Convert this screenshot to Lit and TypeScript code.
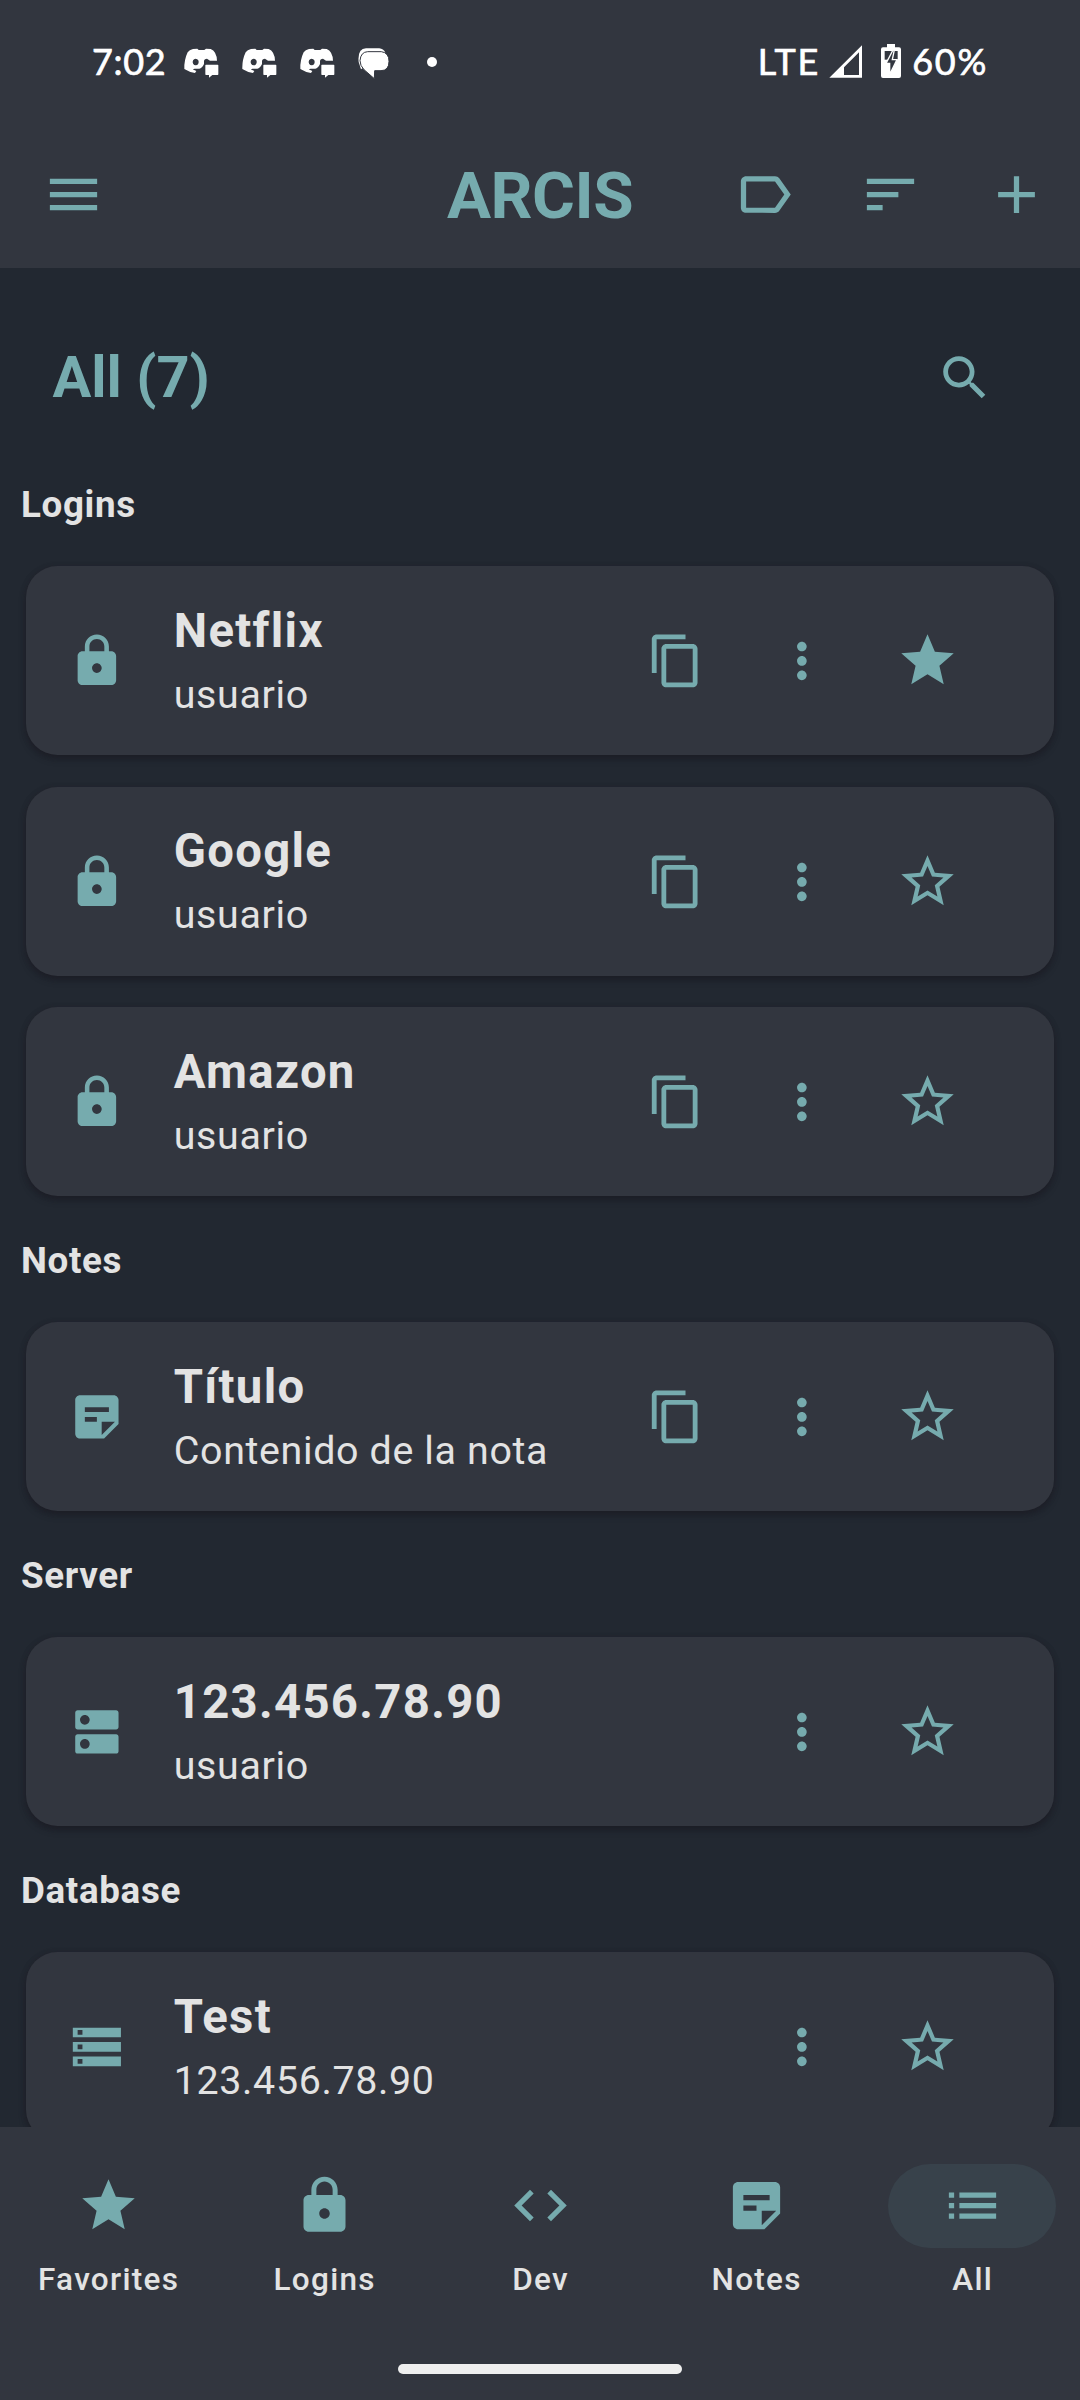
import { LitElement, html, css, nothing } from "lit";
import { customElement, property } from "lit/decorators.js";

type Entry = { icon: string; title: string; subtitle: string; copy?: boolean; starred?: boolean };
type Group = { name: string; entries: Entry[] };

const icons: Record<string, string> = {
  menu: "M3 18h18v-2H3v2zm0-5h18v-2H3v2zm0-7v2h18V6H3z",
  label:
    "M17.63 5.84C17.27 5.33 16.67 5 16 5L5 5.01C3.9 5.01 3 5.9 3 7v10c0 1.1.9 1.99 2 1.99L16 19c.67 0 1.27-.33 1.63-.84L22 12l-4.37-6.16zM16 17H5V7h11l3.55 5L16 17z",
  sort: "M3 18h6v-2H3v2zM3 6v2h18V6H3zm0 7h12v-2H3v2z",
  add: "M19 13h-6v6h-2v-6H5v-2h6V5h2v6h6v2z",
  search:
    "M15.5 14h-.79l-.28-.27C15.41 12.59 16 11.11 16 9.5 16 5.91 13.09 3 9.5 3S3 5.91 3 9.5 5.91 16 9.5 16c1.61 0 3.09-.59 4.23-1.57l.27.28v.79l5 4.99L20.49 19l-4.99-5zm-6 0C7.01 14 5 11.99 5 9.5S7.01 5 9.5 5 14 7.01 14 9.5 11.99 14 9.5 14z",
  lock: "M18 8h-1V6c0-2.76-2.24-5-5-5S7 3.24 7 6v2H6c-1.1 0-2 .9-2 2v10c0 1.1.9 2 2 2h12c1.1 0 2-.9 2-2V10c0-1.1-.9-2-2-2zm-6 9c-1.1 0-2-.9-2-2s.9-2 2-2 2 .9 2 2-.9 2-2 2zm3.1-9H8.9V6c0-1.71 1.39-3.1 3.1-3.1 1.71 0 3.1 1.39 3.1 3.1v2z",
  note: "M19 3H4.99C3.89 3 3 3.9 3 5l.01 14c0 1.1.89 2 1.99 2h10l6-6V5c0-1.1-.9-2-2-2zM7 8h10v2H7V8zm5 6H7v-2h5v2zm2 5.5V14h5.5L14 19.5z",
  dns: "M20 13H4c-.55 0-1 .45-1 1v6c0 .55.45 1 1 1h16c.55 0 1-.45 1-1v-6c0-.55-.45-1-1-1zM7 19c-1.1 0-2-.9-2-2s.9-2 2-2 2 .9 2 2-.9 2-2 2zM20 3H4c-.55 0-1 .45-1 1v6c0 .55.45 1 1 1h16c.55 0 1-.45 1-1V4c0-.55-.45-1-1-1zM7 9c-1.1 0-2-.9-2-2s.9-2 2-2 2 .9 2 2-.9 2-2 2z",
  storage: "M2 20h20v-4H2v4zm2-3h2v2H4v-2zM2 4v4h20V4H2zm4 3H4V5h2v2zm-4 7h20v-4H2v4zm2-3h2v2H4v-2z",
  copy: "M16 1H4c-1.1 0-2 .9-2 2v14h2V3h12V1zm3 4H8c-1.1 0-2 .9-2 2v14c0 1.1.9 2 2 2h11c1.1 0 2-.9 2-2V7c0-1.1-.9-2-2-2zm0 16H8V7h11v14z",
  more: "M12 8c1.1 0 2-.9 2-2s-.9-2-2-2-2 .9-2 2 .9 2 2 2zm0 2c-1.1 0-2 .9-2 2s.9 2 2 2 2-.9 2-2-.9-2-2-2zm0 6c-1.1 0-2 .9-2 2s.9 2 2 2 2-.9 2-2-.9-2-2-2z",
  star: "M12 17.27L18.18 21l-1.64-7.03L22 9.24l-7.19-.61L12 2 9.19 8.63 2 9.24l5.46 4.73L5.82 21z",
  starOutline:
    "M22 9.24l-7.19-.62L12 2 9.19 8.63 2 9.24l5.46 4.73L5.82 21 12 17.27 18.18 21l-1.63-7.03L22 9.24zM12 15.4l-3.76 2.27 1-4.28-3.32-2.88 4.38-.38L12 6.1l1.71 4.04 4.38.38-3.32 2.88 1 4.28L12 15.4z",
  code: "M9.4 16.6L4.8 12l4.6-4.6L8 6l-6 6 6 6 1.4-1.4zm5.2 0l4.6-4.6-4.6-4.6L16 6l6 6-6 6-1.4-1.4z",
  list: "M3 13h2v-2H3v2zm0 4h2v-2H3v2zm0-8h2V7H3v2zm4 4h14v-2H7v2zm0 4h14v-2H7v2zM7 7v2h14V7H7z",
};

const groups: Group[] = [
  {
    name: "Logins",
    entries: [
      { icon: "lock", title: "Netflix", subtitle: "usuario", copy: true, starred: true },
      { icon: "lock", title: "Google", subtitle: "usuario", copy: true },
      { icon: "lock", title: "Amazon", subtitle: "usuario", copy: true },
    ],
  },
  { name: "Notes", entries: [{ icon: "note", title: "Título", subtitle: "Contenido de la nota", copy: true }] },
  { name: "Server", entries: [{ icon: "dns", title: "123.456.78.90", subtitle: "usuario" }] },
  { name: "Database", entries: [{ icon: "storage", title: "Test", subtitle: "123.456.78.90" }] },
];

const tabs = [
  { icon: "star", label: "Favorites" },
  { icon: "lock", label: "Logins" },
  { icon: "code", label: "Dev" },
  { icon: "note", label: "Notes" },
  { icon: "list", label: "All", active: true },
];

@customElement("md-icon")
class MdIcon extends LitElement {
  @property() name = "";
  static styles = css`
    :host { display: block; width: 63px; height: 63px; color: #76abae; flex: none; }
    .glyph { display: block; width: 100%; height: 100%; fill: currentColor; }
  `;
  render() {
    return html`<svg class="glyph" viewBox="0 0 24 24"><path d=${icons[this.name] ?? ""}></path></svg>`;
  }
}

@customElement("status-bar")
class StatusBar extends LitElement {
  static styles = css`
    :host { display: flex; justify-content: space-between; height: 121px; padding: 1px 92px 0 92px;
      box-sizing: border-box; align-items: center; color: #fff;
      font: 400 36px/44px Lato, "Open Sans", sans-serif; letter-spacing: 0.7px; -webkit-text-stroke: 0.7px #fff; }
    .side { display: flex; align-items: center; }
    .time { width: 91.5px; }
    .lte { letter-spacing: 1.6px; }
    .percent { letter-spacing: 1.7px; }
    .chat { width: 35px; height: 31px; margin-right: 23px; margin-top: 5px; }
    .message { width: 31px; height: 31px; margin-left: 0.5px; margin-top: 4px; }
    .dot { width: 10px; height: 10px; border-radius: 50%; background: #fff; margin: 2px 0 0 38px; }
    .signal { width: 33px; height: 33px; margin: 1px 0 0 9.5px; }
    .battery { width: 20px; height: 34px; margin: 0 11px 0 19px; }
    svg { display: block; fill: #fff; }
  `;
  private chat() {
    return html`<svg class="chat" viewBox="370 89 105 93">
      <path fill-rule="evenodd" d="M397 92L410 91L414 95H431L436 91L450 92Q459 95 463 103Q469 114 469 127H448L439 121Q430 121 430 129V137Q424 150 416 151H402L396 153L407 158L403 164Q385 161 371 152Q370 125 381 102Q386 95 397 92ZM405 121A9 10 0 1 0 405.1 121Z"></path>
      <path d="M436 139H471Q473 139 473 141V168Q473 170 471 170H455L445 178V170H436Q434 170 434 168V141Q434 139 436 139Z"></path>
    </svg>`;
  }
  render() {
    return html`
      <div class="side">
        <span class="time">7:02</span>${this.chat()}${this.chat()}${this.chat()}
        <svg class="message" viewBox="896 86 93 93">
          <path d="M898 128Q894 88 920 87H960Q972 88 978 100L905 150Z"></path>
          <path fill="#fff" stroke="#32363f" stroke-width="3" d="M925 97H966Q989 100 989 126Q989 154 965 154H946L945 178L914 151Q902 139 902 124Q904 98 925 97Z"></path>
        </svg>
        <span class="dot"></span>
      </div>
      <div class="side">
        <span class="lte">LTE</span>
        <svg class="signal" viewBox="267 75 99 99">
          <path fill-rule="evenodd" d="M268 173L366 76V173ZM312 165H357V97L312 142Z"></path>
        </svg>
        <svg class="battery" viewBox="423 72 60 102">
          <path d="M441 72H465V82H477Q483 82 483 88V168Q483 174 477 174H429Q423 174 423 168V88Q423 82 429 82H441Z"></path>
          <path fill="#32363f" d="M434 93H473V119H434Z"></path>
          <path fill="#32363f" stroke="#fff" stroke-width="4" d="M459 90L438 130H449V164L471 119H457L463 90Z"></path>
        </svg>
        <span class="percent">60%</span>
      </div>
    `;
  }
}

@customElement("entry-card")
class EntryCard extends LitElement {
  @property({ attribute: false }) entry!: Entry;
  static styles = css`
    :host { display: flex; align-items: center; height: 189px; box-sizing: border-box; padding: 0 63.25px 0 42px;
      background: #32363f; border-radius: 31.5px; color: #e3e3e3;
      box-shadow: 0 4px 6px rgba(22, 22, 30, 0.5), 0 1px 5px rgba(38, 33, 44, 0.5); }
    .kind { width: 57.75px; height: 57.75px; margin-right: 47.75px; }
    .text { flex: 1; min-width: 0; padding-top: 4.5px; }
    .title { font-weight: 700; font-size: 47.25px; line-height: 62.75px; letter-spacing: 1.3125px; }
    .subtitle { font-size: 39.375px; line-height: 63.8px; letter-spacing: 0.656px; }
    .action { width: 126px; display: flex; justify-content: center; flex: none; }
    .small { width: 57.75px; height: 57.75px; }
  `;
  render() {
    const e = this.entry;
    return html`
      <md-icon class="kind" name=${e.icon}></md-icon>
      <div class="text">
        <div class="title">${e.title}</div>
        <div class="subtitle">${e.subtitle}</div>
      </div>
      ${e.copy ? html`<div class="action"><md-icon class="small" name="copy"></md-icon></div>` : nothing}
      <div class="action"><md-icon class="small" name="more"></md-icon></div>
      <div class="action"><md-icon name=${e.starred ? "star" : "starOutline"}></md-icon></div>
    `;
  }
}

@customElement("app-root")
class AppRoot extends LitElement {
  static styles = css`
    :host { display: flex; flex-direction: column; width: 1080px; height: 2400px; overflow: hidden;
      background: #222831; color: #e3e3e3; font-family: Roboto, "Liberation Sans", sans-serif; }
    .top { background: #32363f; flex: none; }
    .bar { display: grid; grid-template-columns: 1fr auto 1fr; align-items: center; height: 147px; }
    .menu { padding-left: 42px; }
    .brand { color: #76abae; font-weight: 700; font-size: 65.625px; line-height: 76px; letter-spacing: -0.5px;
      padding-top: 2px; }
    .actions { display: flex; justify-content: flex-end; padding-right: 0.5px; }
    .button { width: 126px; display: flex; justify-content: center; }
    .content { flex: 1; min-height: 0; overflow: hidden; }
    .heading { display: flex; justify-content: space-between; align-items: center; box-sizing: border-box;
      height: 172.4px; padding: 46.5px 86.7px 0 52.5px; color: #76abae; }
    .count { font-weight: 700; font-size: 57.75px; line-height: 68px; padding-bottom: 0.8px; }
    .search { width: 57.75px; height: 57.75px; }
    .section { height: 126px; box-sizing: border-box; padding: 2.6px 21px 0; font-weight: 700; font-size: 36.75px;
      line-height: 124px; letter-spacing: 0.656px; }
    .cards { display: flex; flex-direction: column; gap: 31.5px; padding: 0 26.25px; }
    .nav { flex: none; height: 273px; box-sizing: border-box; background: #32363f; display: flex;
      flex-direction: column; justify-content: space-between; align-items: center; padding: 36.5px 0 26px; }
    .tabs { display: flex; width: 100%; }
    .tab { flex: 1; display: flex; flex-direction: column; align-items: center; gap: 11px; }
    .pill { width: 168px; height: 84px; border-radius: 42px; display: flex; align-items: center; justify-content: center; }
    .active { background: #38424b; }
    .label { font-weight: 500; font-size: 31.5px; line-height: 42px; letter-spacing: 1.3125px; padding-left: 1.3px; }
    .handle { width: 284px; height: 10px; border-radius: 5px; background: #efefef; }
  `;
  render() {
    return html`
      <header class="top">
        <status-bar></status-bar>
        <div class="bar">
          <div class="menu"><md-icon name="menu"></md-icon></div>
          <div class="brand">ARCIS</div>
          <div class="actions">
            <div class="button"><md-icon name="label"></md-icon></div>
            <div class="button"><md-icon name="sort"></md-icon></div>
            <div class="button"><md-icon name="add"></md-icon></div>
          </div>
        </div>
      </header>
      <main class="content">
        <div class="heading"><span class="count">All (7)</span><md-icon class="search" name="search"></md-icon></div>
        ${groups.map(
          (g) => html`
            <div class="section">${g.name}</div>
            <div class="cards">${g.entries.map((e) => html`<entry-card .entry=${e}></entry-card>`)}</div>
          `,
        )}
      </main>
      <nav class="nav">
        <div class="tabs">
          ${tabs.map(
            (t) => html`<div class="tab">
              <div class=${t.active ? "pill active" : "pill"}><md-icon name=${t.icon}></md-icon></div>
              <span class="label">${t.label}</span>
            </div>`,
          )}
        </div>
        <div class="handle"></div>
      </nav>
    `;
  }
}
